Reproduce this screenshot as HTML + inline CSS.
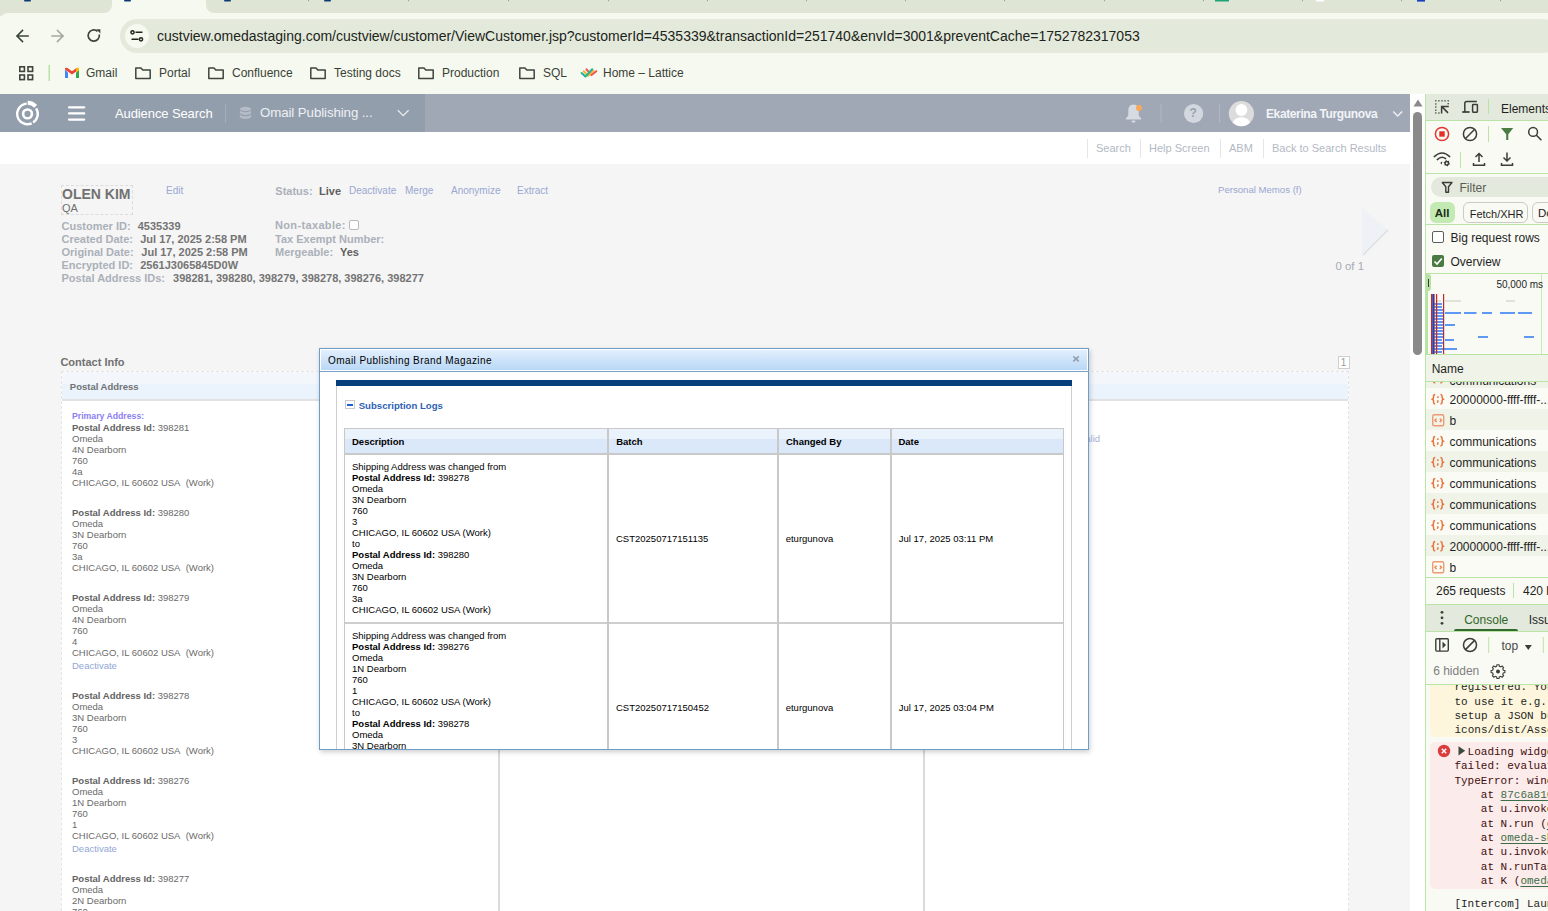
<!DOCTYPE html>
<html><head><meta charset="utf-8">
<style>
*{box-sizing:border-box;margin:0;padding:0}
html,body{width:1548px;height:911px;overflow:hidden;background:#f5f5f5;font-family:"Liberation Sans",sans-serif}
.a{position:absolute;white-space:nowrap;line-height:1}
svg{position:absolute;overflow:visible}
/* chrome */
#tabs{position:absolute;left:0;top:0;width:1548px;height:16px;background:#dee5d5}
#tab1{position:absolute;left:0;top:-10px;width:112px;height:22.5px;background:#dee5d5;border-radius:0 0 8px 0}
#tab2{position:absolute;left:206px;top:-10px;width:1400px;height:22.5px;background:#dee5d5;border-radius:0 0 0 8px}
#acttab{position:absolute;left:112px;top:0;width:94px;height:14px;background:#f6f9f0}
#toolbar{position:absolute;left:0;top:12.5px;width:1548px;height:82px;background:#f6f9f0;border-radius:8px 0 0 0}
#url{position:absolute;left:120px;top:19px;width:1440px;height:34px;border-radius:17px;background:#e3eadb}
#siteinfo{position:absolute;left:125px;top:24px;width:24px;height:24px;border-radius:12px;background:#f6f9f0}
.bm{position:absolute;top:66.6px;font-size:12px;color:#3a3f36;line-height:1;white-space:nowrap}
/* app header */
#hdr{position:absolute;left:0;top:94px;width:1410px;height:38px;background:#a0a8b6}
#hdrl{position:absolute;left:0;top:94px;width:425px;height:38px;background:#939eac}
#subnav{position:absolute;left:0;top:132px;width:1410px;height:32px;background:#fff}
.sn{position:absolute;top:143.2px;font-size:11px;color:#b3b9c4}
.snsep{position:absolute;top:139px;width:1px;height:19px;background:#e6e6e6}
/* scrollbar */
#sb{position:absolute;left:1410px;top:94px;width:16px;height:817px;background:#fff}
#thumb{position:absolute;left:1413px;top:112px;width:9px;height:243px;border-radius:5px;background:#8a8a8a}
/* devtools */
#dt{position:absolute;left:1425px;top:94px;width:123px;height:817px;background:#f9faf3;border-left:1px solid #b8e6a8;overflow:hidden}

.lbl{font-size:11px;font-weight:700;color:#abb0b9}
.val{font-size:11px;font-weight:700;color:#747474}
.lnk{font-size:10px;color:#9aa7d2}

.addr{position:absolute;left:72px;font-size:9.5px;line-height:11px;color:#6a6a6a;white-space:nowrap}
.addr b{color:#636363}
.addr b.prim{color:#8b80f2;font-size:8.7px}
.deact{color:#93a6d6;margin-top:1.8px}
#dlg{position:absolute;left:319px;top:348px;width:770px;height:402px;border:1px solid #6f9dc9;background:#fff;box-shadow:1px 2px 5px rgba(0,0,0,0.2);overflow:hidden}
#dtitle{position:absolute;left:0;top:0;width:768px;height:22px;border:1px solid #fff;border-bottom:1.5px solid #fff;background:linear-gradient(#e2effd,#b9d8f7)}
#dtline{position:absolute;left:0;top:22px;width:768px;height:1px;background:#7aa2c8}
.tb{position:absolute;font-size:9.5px;line-height:11px;color:#000;white-space:nowrap}
.tb b{color:#000}
.th{position:absolute;font-size:9.5px;font-weight:700;color:#000;line-height:1;white-space:nowrap}

#dt .t{position:absolute;white-space:nowrap;font-size:12px;line-height:1;color:#1f1f1f}
#dt .ln{position:absolute;left:0;width:122px;height:1px;background:#b9e4a6}
#dt .row{position:absolute;left:0;width:122px;height:21px}
#dt .mono{position:absolute;white-space:pre;font-family:"Liberation Mono",monospace;font-size:11px;line-height:14.35px;color:#1f1f1f}
#dt .lk{color:#3b6d46;text-decoration:underline;text-underline-offset:1.5px}
</style></head>
<body>
<!-- CHROME TABS -->
<div id="tabs"></div>
<div id="toolbar"></div>
<div style="position:absolute;left:0;top:0;width:1548px;height:12.5px;background:#f6f9f0"></div>
<div id="tab1"></div><div id="tab2"></div>
<svg style="left:0;top:0" width="1548" height="4"><rect x="24" y="0" width="7" height="1.6" rx="0.8" fill="#0b3a78"/><rect x="124" y="0" width="7" height="1.6" rx="0.8" fill="#0b3a78"/><rect x="224" y="0" width="7" height="1.6" rx="0.8" fill="#0b3a78"/><rect x="324" y="0" width="7" height="1.6" rx="0.8" fill="#0b3a78"/><rect x="308" y="0" width="1" height="1.2" fill="#9aa393"/><rect x="408" y="0" width="1" height="1.2" fill="#9aa393"/><rect x="508" y="0" width="1" height="1.2" fill="#9aa393"/><rect x="608" y="0" width="1" height="1.2" fill="#9aa393"/><rect x="707" y="0" width="1" height="1.2" fill="#9aa393"/><rect x="806" y="0" width="1" height="1.2" fill="#9aa393"/><rect x="905" y="0" width="1" height="1.2" fill="#9aa393"/><rect x="1004" y="0" width="1" height="1.2" fill="#9aa393"/><rect x="1104" y="0" width="1" height="1.2" fill="#9aa393"/><rect x="1203" y="0" width="1" height="1.2" fill="#9aa393"/><rect x="1302" y="0" width="1" height="1.2" fill="#9aa393"/><rect x="1401" y="0" width="1" height="1.2" fill="#9aa393"/><rect x="1500" y="0" width="1" height="1.2" fill="#9aa393"/><rect x="1215" y="0" width="14" height="1.5" fill="#21a37a"/><rect x="1316" y="0" width="8" height="1.5" fill="#ffffff"/><rect x="1417" y="0" width="8" height="1.6" fill="#1a3fc2"/></svg>
<div id="url"></div>
<div id="siteinfo"></div>
<div class="a" style="left:157px;top:28.7px;font-size:14px;color:#1d2420">custview.omedastaging.com/custview/customer/ViewCustomer.jsp?customerId=4535339&amp;transactionId=251740&amp;envId=3001&amp;preventCache=1752782317053</div>


<!-- toolbar icons -->
<svg style="left:0;top:0" width="200" height="60">
 <g fill="none" stroke="#3c4638" stroke-width="1.6" stroke-linecap="square">
  <path d="M28 36H17M22.5 30.5L17 36L22.5 41.5"/>
 </g>
 <g fill="none" stroke="#a3ab9c" stroke-width="1.6" stroke-linecap="square">
  <path d="M52 36H63M57.5 30.5L63 36L57.5 41.5"/>
 </g>
 <g fill="none" stroke="#3c4638" stroke-width="1.7">
  <path d="M99.3 34.5A5.6 5.6 0 1 1 97.5 31.3"/>
 </g>
 <path d="M96.2 29.2L100.4 29.2L100.4 33.4Z" fill="#3c4638"/>
 <g fill="none" stroke="#1f261c" stroke-width="1.5">
  <circle cx="132.5" cy="32.3" r="1.6"/>
  <path d="M135.5 32.3H142.5M131.5 39.3H138.5"/>
  <circle cx="141" cy="39.3" r="1.6"/>
 </g>
</svg>
<!-- bookmarks -->
<svg style="left:0;top:0" width="700" height="94">
 <g fill="none" stroke="#3f443c" stroke-width="1.6">
  <rect x="19.8" y="66.8" width="4.6" height="4.6"/>
  <rect x="28" y="66.8" width="4.6" height="4.6"/>
  <rect x="19.8" y="75" width="4.6" height="4.6"/>
  <rect x="28" y="75" width="4.6" height="4.6"/>
 </g>
 <rect x="48.5" y="65" width="1.5" height="16" fill="#b6e3a3"/>
 <g>
  <path d="M65 69.5V78H68V72.5Z" fill="#4285f4"/>
  <path d="M76 72.5V78H79V69.5Z" fill="#34a853"/>
  <path d="M65 69.5L72 74.5L79 69.5L79 68.3Q77.8 67.2 76.5 68L72 71.3L67.5 68Q66.2 67.2 65 68.3Z" fill="#ea4335"/>
  <path d="M76 72.5L79 70.3V68.3Q77.8 67.2 76.5 68L76 68.4Z" fill="#fbbc04"/>
 </g>
 <g fill="none" stroke="#3f443c" stroke-width="1.5" stroke-linejoin="round">
  <path id="fold" d="M135.8 68H141L142.8 70H150.2V78.4H135.8Z"/>
  <use href="#fold" x="73"/>
  <use href="#fold" x="175"/>
  <use href="#fold" x="283"/>
  <use href="#fold" x="384"/>
 </g>
 <g stroke-width="2" stroke-linecap="round" stroke-linejoin="round" fill="none">
  <path d="M586.5 69.3L591.5 75L596.3 71.2" stroke="#ef5350"/>
  <path d="M583.8 71.3L588 75.8L593.5 70.5" stroke="#f6b132"/>
  <path d="M581.6 73L585.4 76.6L592.2 69.2" stroke="#1fb59a"/>
 </g>
</svg>
<div class="bm" style="left:86px">Gmail</div>
<div class="bm" style="left:159px">Portal</div>
<div class="bm" style="left:232px">Confluence</div>
<div class="bm" style="left:334px">Testing docs</div>
<div class="bm" style="left:442px">Production</div>
<div class="bm" style="left:543px">SQL</div>
<div class="bm" style="left:603px">Home – Lattice</div>

<!-- APP HEADER -->
<div id="hdr"></div>
<div id="hdrl"></div>
<div id="subnav"></div>

<svg style="left:0;top:94px" width="1410" height="38">
 <!-- logo -->
 <g fill="none" stroke="#fff">
  <circle cx="27.5" cy="19.9" r="4.4" stroke-width="2.6"/>
  <path d="M26.6 9.64A10.3 10.3 0 1 0 31.69 29.31" stroke-width="2.4"/>
  <path d="M33.11 28.54A10.3 10.3 0 0 0 36.14 14.29" stroke-width="2.4"/>
 </g>
 <path d="M27.73 6.7A13.2 13.2 0 0 1 37.15 10.9L34.16 13.69A9.1 9.1 0 0 0 27.66 10.8Z" fill="#fff"/>
 <!-- hamburger -->
 <g stroke="#fff" stroke-width="2.2" stroke-linecap="round">
  <path d="M69 13.3H84.2M69 19.4H84.2M69 25.6H84.2"/>
 </g>
 <rect x="225" y="10" width="1" height="19" fill="#a4adb9"/>
 <!-- db icon -->
 <g fill="#b5bcc7" transform="translate(0,1.5)">
  <ellipse cx="245.5" cy="13.5" rx="5.6" ry="2.2"/>
  <path d="M239.9 14.5V17.2A5.6 2.2 0 0 0 251.1 17.2V14.5A5.6 2.2 0 0 1 239.9 14.5Z"/>
  <path d="M239.9 18.6V21.2A5.6 2.2 0 0 0 251.1 21.2V18.6A5.6 2.2 0 0 1 239.9 18.6Z"/>
 </g>
 <path d="M397.8 16.3L403.2 21.6L408.6 16.3" fill="none" stroke="#e8ebef" stroke-width="1.3"/>
 <!-- bell -->
 <path d="M1133.5 10.5C1129.5 10.5 1128.3 13.7 1128.3 17V21.5L1125.8 24.5V25.6H1141.2V24.5L1138.7 21.5V17C1138.7 13.7 1137.5 10.5 1133.5 10.5Z" fill="#d6dae1"/>
 <rect x="1131.5" y="26.5" width="4" height="2" rx="1" fill="#d6dae1"/>
 <circle cx="1139" cy="14" r="3" fill="#f7a85a"/>
 <rect x="1160.5" y="10" width="1" height="19" fill="#b0b7c2"/>
 <circle cx="1193.6" cy="19.5" r="9.6" fill="#d3d7de"/>
 <rect x="1219" y="10" width="1" height="19" fill="#b0b7c2"/>
 <circle cx="1241.4" cy="19.6" r="12.6" fill="#dcdcdc"/>
 <clipPath id="avc"><circle cx="1241.4" cy="19.6" r="12.6"/></clipPath>
 <g clip-path="url(#avc)" fill="#fff">
  <circle cx="1241.4" cy="16" r="5.9"/>
  <ellipse cx="1241.4" cy="31.5" rx="9.3" ry="8.6"/>
 </g>
 <path d="M1393.2 17.4L1397.7 21.9L1402.2 17.4" fill="none" stroke="#eef0f3" stroke-width="1.4"/>
</svg>
<div class="a" style="left:115px;top:106.7px;font-size:13px;color:#fff;letter-spacing:-0.1px">Audience Search</div>
<div class="a" style="left:260px;top:105.7px;font-size:13.3px;color:#eef0f4;letter-spacing:-0.1px">Omail Publishing ...</div>
<div class="a" style="left:1189.5px;top:106.5px;font-size:12px;font-weight:700;color:#9ba3b0">?</div>
<div class="a" style="left:1266px;top:108px;font-size:12px;letter-spacing:-0.38px;font-weight:700;color:#f2f4f7">Ekaterina Turgunova</div>



<!-- SUBNAV -->
<div class="snsep" style="left:1087px"></div>
<div class="snsep" style="left:1140px"></div>
<div class="snsep" style="left:1220px"></div>
<div class="snsep" style="left:1263px"></div>
<div class="a sn" style="left:1096px">Search</div>
<div class="a sn" style="left:1149px">Help Screen</div>
<div class="a sn" style="left:1229px">ABM</div>
<div class="a sn" style="left:1272px">Back to Search Results</div>

<!-- CUSTOMER -->
<div style="position:absolute;left:61px;top:185px;width:72px;height:30px;border:1px dashed #dcdcdc"></div>
<div class="a" style="left:62px;top:187.1px;font-size:14px;font-weight:700;color:#727272">OLEN KIM</div>
<div class="a" style="left:62px;top:202.7px;font-size:11px;color:#707070">QA</div>
<div class="a lnk" style="left:166px;top:185.5px">Edit</div>
<div class="a lbl" style="left:61.5px;top:220.7px">Customer ID:</div><div class="a val" style="left:137.7px;top:220.7px">4535339</div>
<div class="a lbl" style="left:61.5px;top:233.7px">Created Date:</div><div class="a val" style="left:140.2px;top:233.7px">Jul 17, 2025 2:58 PM</div>
<div class="a lbl" style="left:61.5px;top:246.5px">Original Date:</div><div class="a val" style="left:141.3px;top:246.5px">Jul 17, 2025 2:58 PM</div>
<div class="a lbl" style="left:61.5px;top:259.5px">Encrypted ID:</div><div class="a val" style="left:140.2px;top:259.5px">2561J3065845D0W</div>
<div class="a lbl" style="left:61.5px;top:272.7px">Postal Address IDs:</div><div class="a val" style="left:173.1px;top:272.7px">398281, 398280, 398279, 398278, 398276, 398277</div>

<div class="a lbl" style="left:275.3px;top:186.1px">Status:</div><div class="a val" style="left:319px;top:186.1px;color:#5f5f5f">Live</div>
<div class="a lnk" style="left:349px;top:186px">Deactivate</div>
<div class="a lnk" style="left:405px;top:186px">Merge</div>
<div class="a lnk" style="left:451px;top:186px">Anonymize</div>
<div class="a lnk" style="left:517px;top:186px">Extract</div>
<div class="a lbl" style="left:275px;top:219.6px;letter-spacing:0.35px">Non-taxable:</div>
<div style="position:absolute;left:349px;top:220px;width:10px;height:10px;border:1px solid #b9b9b9;border-radius:2px;background:#fff"></div>
<div class="a lbl" style="left:275px;top:233.9px">Tax Exempt Number:</div>
<div class="a lbl" style="left:275px;top:247px">Mergeable:</div><div class="a val" style="left:340px;top:247px;color:#5f5f5f">Yes</div>

<div class="a lnk" style="left:1218px;top:184.9px;font-size:9.6px">Personal Memos (f)</div>
<svg style="left:1355px;top:200px" width="45" height="65">
 <path d="M7 8L33 30L7 56Z" fill="#eef2f7"/>
 <path d="M33 30L8 55" stroke="#dedede" stroke-width="1.2" fill="none"/>
</svg>
<div class="a" style="left:1335.5px;top:261.2px;font-size:11.4px;color:#a6abb4">0 of 1</div>

<!-- CONTACT INFO -->
<div class="a" style="left:60.4px;top:356.7px;font-size:11px;font-weight:700;color:#717171">Contact Info</div>
<div style="position:absolute;left:1337.5px;top:355.5px;width:12.5px;height:13px;border:1px solid #cfcfcf;background:#fff"></div>
<div class="a" style="left:1340.8px;top:357.8px;font-size:10px;color:#9a9a9a">1</div>
<div id="cpanel" style="position:absolute;left:60.5px;top:371px;width:1288.5px;height:600px;border:1px dashed #e4e4e4;background:#fff">
 <div style="position:absolute;left:0;top:0;width:100%;height:28.5px;background:linear-gradient(#f3f7fc 0,#f3f7fc 45%,#ebf3fd 45%,#ebf3fd 100%);border-bottom:2px solid #e2e2e2"></div>
 <div style="position:absolute;left:436.8px;top:30px;width:1.5px;height:600px;background:#dadada"></div>
 <div style="position:absolute;left:861.8px;top:30px;width:1.5px;height:600px;background:#dadada"></div>
</div>
<div class="a" style="left:69.8px;top:382px;font-size:9.5px;font-weight:700;color:#727272">Postal Address</div>
<div class="a" style="left:1085.3px;top:433.5px;font-size:9.5px;color:#a7b1d6">alid</div>

<div class="addr" style="top:410.2px"><b class="prim">Primary Address:</b><br><b>Postal Address Id:</b> 398281<br>Omeda<br>4N Dearborn<br>760<br>4a<br>CHICAGO, IL 60602 USA&nbsp; (Work)</div><div class="addr" style="top:506.9px"><b>Postal Address Id:</b> 398280<br>Omeda<br>3N Dearborn<br>760<br>3a<br>CHICAGO, IL 60602 USA&nbsp; (Work)</div><div class="addr" style="top:591.9px"><b>Postal Address Id:</b> 398279<br>Omeda<br>4N Dearborn<br>760<br>4<br>CHICAGO, IL 60602 USA&nbsp; (Work)<div class="deact">Deactivate</div></div><div class="addr" style="top:690.4px"><b>Postal Address Id:</b> 398278<br>Omeda<br>3N Dearborn<br>760<br>3<br>CHICAGO, IL 60602 USA&nbsp; (Work)</div><div class="addr" style="top:775px"><b>Postal Address Id:</b> 398276<br>Omeda<br>1N Dearborn<br>760<br>1<br>CHICAGO, IL 60602 USA&nbsp; (Work)<div class="deact">Deactivate</div></div><div class="addr" style="top:872.8px"><b>Postal Address Id:</b> 398277<br>Omeda<br>2N Dearborn<br>760</div>

<div id="dlg">
 <div id="dtitle"></div>
 <div id="dtline"></div>
 <div class="a" style="left:8px;top:7.4px;font-size:10px;letter-spacing:0.43px;color:#000">Omail Publishing Brand Magazine</div>
 <svg style="left:752px;top:5.6px" width="10" height="8"><path d="M1.3 1.3L6.8 6.4M6.8 1.3L1.3 6.4" stroke="#95a0ae" stroke-width="1.6"/></svg>
 <!-- inner panel; coords relative to dialog (x-320, y-349) -->
 <div style="position:absolute;left:16px;top:31px;width:736px;height:400px;border-left:1px solid #cfcfcf;border-right:1px solid #cfcfcf"></div>
 <div style="position:absolute;left:16px;top:31px;width:736px;height:6px;background:#063e7b"></div>
 <div style="position:absolute;left:25px;top:50.5px;width:10px;height:9.5px;border:1px solid #c9c9c9;background:#fff"></div>
 <div style="position:absolute;left:27px;top:54.6px;width:6px;height:2px;background:#1f5fd6"></div>
 <div class="a" style="left:38.7px;top:52px;font-size:9.6px;font-weight:700;color:#2e5fb4">Subscription Logs</div>
 <!-- table -->
 <div style="position:absolute;left:24px;top:78.5px;width:720px;height:400px;border:1px solid #c8c8c8;border-bottom:none"></div>
 <div style="position:absolute;left:25px;top:79.5px;width:718px;height:24px;background:linear-gradient(#eaf2fc 0,#eaf2fc 42%,#dbe8f9 42%,#dbe8f9 100%)"></div>
 <div style="position:absolute;left:25px;top:103.5px;width:718px;height:2px;background:#c9c9c9"></div>
 <div style="position:absolute;left:25px;top:273px;width:718px;height:2px;background:#cfcfcf"></div>
 <div style="position:absolute;left:287px;top:79px;width:2px;height:400px;background:#c9c9c9"></div>
 <div style="position:absolute;left:457px;top:79px;width:2px;height:400px;background:#c9c9c9"></div>
 <div style="position:absolute;left:570px;top:79px;width:2px;height:400px;background:#c9c9c9"></div>
 <div class="th" style="left:32px;top:88px">Description</div>
 <div class="th" style="left:296.2px;top:88px">Batch</div>
 <div class="th" style="left:466px;top:88px">Changed By</div>
 <div class="th" style="left:578.4px;top:88px">Date</div>
 <div class="tb" style="left:32px;top:112.4px">Shipping Address was changed from<br><b>Postal Address Id:</b> 398278<br>Omeda<br>3N Dearborn<br>760<br>3<br>CHICAGO, IL 60602 USA (Work)<br>to<br><b>Postal Address Id:</b> 398280<br>Omeda<br>3N Dearborn<br>760<br>3a<br>CHICAGO, IL 60602 USA (Work)</div>
 <div class="tb" style="left:296px;top:184.2px">CST20250717151135</div>
 <div class="tb" style="left:465.7px;top:184.2px">eturgunova</div>
 <div class="tb" style="left:578.8px;top:184.2px">Jul 17, 2025 03:11 PM</div>
 <div class="tb" style="left:32px;top:280.6px">Shipping Address was changed from<br><b>Postal Address Id:</b> 398276<br>Omeda<br>1N Dearborn<br>760<br>1<br>CHICAGO, IL 60602 USA (Work)<br>to<br><b>Postal Address Id:</b> 398278<br>Omeda<br>3N Dearborn<br>760</div>
 <div class="tb" style="left:296px;top:353px">CST20250717150452</div>
 <div class="tb" style="left:465.7px;top:353px">eturgunova</div>
 <div class="tb" style="left:578.8px;top:353px">Jul 17, 2025 03:04 PM</div>
</div>

<div id="sb"></div>
<div id="thumb"></div>
<svg style="left:1410px;top:94px" width="16" height="16"><path d="M3.5 12.5L8 5.5L12.5 12.5Z" fill="#8a8a8a"/></svg>

<div id="dt">
 <div style="position:absolute;left:0;top:0;width:122px;height:26px;background:#e3e9dc"></div>
 <div class="ln" style="top:26px"></div>
 <svg style="left:0;top:0" width="122" height="80">
  <g fill="#3a3d38"><rect x="9.15" y="6.15" width="1.3" height="1.3"/><rect x="12.25" y="6.15" width="1.3" height="1.3"/><rect x="15.35" y="6.15" width="1.3" height="1.3"/><rect x="18.35" y="6.15" width="1.3" height="1.3"/><rect x="21.55" y="6.15" width="1.3" height="1.3"/><rect x="9.15" y="9.35" width="1.3" height="1.3"/><rect x="9.15" y="12.35" width="1.3" height="1.3"/><rect x="9.15" y="15.549999999999999" width="1.3" height="1.3"/><rect x="9.15" y="18.35" width="1.3" height="1.3"/><rect x="12.25" y="18.35" width="1.3" height="1.3"/><rect x="21.55" y="9.05" width="1.3" height="1.3"/></g>
  <g fill="none" stroke="#3a3d38" stroke-width="1.5">
   <path d="M15.6 19.6V12.4H22.8M15.6 12.4L22 18.9"/>
   <path d="M38.8 18V9.6Q38.8 7.6 40.8 7.6H50.8"/>
   <path d="M36.2 18H43.6" stroke-width="1.7"/>
   <rect x="46.6" y="10.6" width="4.8" height="7.6" rx="0.6"/>
  </g>
  <rect x="62" y="5" width="1" height="15" fill="#b9e4a6"/>
  <circle cx="16" cy="40" r="6.6" fill="none" stroke="#e5332f" stroke-width="1.5"/>
  <rect x="13.3" y="37.3" width="5.4" height="5.4" fill="#e3302c"/>
  <circle cx="44" cy="40" r="6.6" fill="none" stroke="#3a3d38" stroke-width="1.5"/>
  <path d="M48.7 35.3L39.3 44.7" stroke="#3a3d38" stroke-width="1.5"/>
  <rect x="62" y="32" width="1" height="16" fill="#b9e4a6"/>
  <path d="M75 34.1H87.2L82.3 40.2V46.1H80.2V40.2Z" fill="#4a7d44"/>
  <circle cx="107.1" cy="37.9" r="4.4" fill="none" stroke="#3a3d38" stroke-width="1.5"/>
  <path d="M110.2 41L115.4 46.2" stroke="#3a3d38" stroke-width="1.6"/>
  <g fill="none" stroke="#3a3d38" stroke-width="1.5" stroke-linecap="round">
   <path d="M8.3 62.6Q16 55.5 23.7 62.6M11.3 65.6Q15.5 61.5 19.6 64.6"/>
  </g>
  <path d="M23.99 70.05L22.50 70.90L21.65 72.39L20.18 71.52L18.47 71.53L18.48 69.82L17.61 68.35L19.10 67.50L19.95 66.01L21.42 66.88L23.13 66.87L23.12 68.58Z" fill="#3a3d38"/>
  <circle cx="20.8" cy="69.2" r="1" fill="#f9faf3"/>
  <path d="M16.3 67.3L14.2 68.9L15.9 70.4Z" fill="#3a3d38"/>
  <rect x="34" y="58" width="1" height="16" fill="#b9e4a6"/>
  <g fill="none" stroke="#3a3d38" stroke-width="1.5">
   <path d="M53 59.5V68M49.5 63L53 59.5L56.5 63M47.5 69V71.3H58.5V69"/>
   <path d="M81 58.5V67M77.5 63.5L81 67L84.5 63.5M75.5 69V71.3H86.5V69"/>
  </g>
 </svg>
 <div class="t" style="left:75px;top:9px">Elements</div>
 <div class="ln" style="top:79px"></div>
 <div style="position:absolute;left:5px;top:83px;width:140px;height:20px;border-radius:10px;background:#e3e9dc"></div>
 <svg style="left:0;top:80px" width="30" height="30"><path d="M16.3 8.5H26L22.5 12.8V18.3H19.8V12.8Z" fill="none" stroke="#3a3d38" stroke-width="1.4" stroke-linejoin="round"/></svg>
 <div class="t" style="left:33.5px;top:87.5px;color:#595d55">Filter</div>
 <div style="position:absolute;left:4px;top:108px;width:25px;height:21px;border-radius:6px;background:#c3eab3"></div>
 <div class="t" style="left:8.8px;top:114.4px;font-weight:600;color:#1c2a18;font-size:11.5px">All</div>
 <div style="position:absolute;left:37px;top:108px;width:65px;height:21px;border-radius:6px;border:1px solid #c8ccc3"></div>
 <div class="t" style="left:43.7px;top:114.8px;font-size:11px">Fetch/XHR</div>
 <div style="position:absolute;left:106px;top:108px;width:40px;height:21px;border-radius:6px;border:1px solid #c8ccc3"></div>
 <div class="t" style="left:112px;top:114.4px;font-size:11.5px">Doc</div>
 <div class="ln" style="top:130px"></div>
 <div style="position:absolute;left:6.3px;top:137.3px;width:11.8px;height:11.8px;border:1.3px solid #5d5d5d;border-radius:2px;background:#fff"></div>
 <div class="t" style="left:24.5px;top:138.3px">Big request rows</div>
 <div style="position:absolute;left:6.3px;top:161.3px;width:11.8px;height:11.8px;border-radius:2px;background:#4b7b45"></div>
 <svg style="left:0;top:150px" width="24" height="30"><path d="M8.5 17.5L11 20L15.8 14.5" fill="none" stroke="#fff" stroke-width="1.7"/></svg>
 <div class="t" style="left:24.5px;top:162px">Overview</div>
 <div class="ln" style="top:179px"></div>
 <!-- overview -->
 <div style="position:absolute;left:0;top:180px;width:4.5px;height:17px;border-radius:0 3px 3px 0;background:#b6e3a2"></div>
 <div style="position:absolute;left:1.5px;top:185px;width:1px;height:8px;background:#3b3b3b"></div>
 <div style="position:absolute;left:115px;top:180px;width:1px;height:80px;background:#c9ebbb"></div>
 <div style="position:absolute;left:0;top:197px;width:1.5px;height:63px;background:#b6e3a2"></div>
 <div class="t" style="left:70.4px;top:186.3px;font-size:10px">50,000 ms</div>
 <svg style="left:0;top:180px" width="122" height="80">
  <g fill="#5d98f3"><rect x="8" y="29" width="8" height="2"/><rect x="8" y="32" width="8" height="2"/><rect x="8" y="35" width="9" height="2"/><rect x="8" y="38" width="9" height="2"/><rect x="8" y="41" width="9" height="2"/><rect x="8" y="44" width="9" height="2"/><rect x="8" y="47" width="9" height="2"/><rect x="8" y="50" width="9" height="2"/><rect x="8" y="53" width="10" height="2"/><rect x="8" y="56" width="10" height="2"/><rect x="8" y="59" width="10" height="2"/><rect x="8" y="62" width="10" height="2"/><rect x="8" y="65" width="8" height="2"/><rect x="8" y="68" width="9" height="2"/><rect x="8" y="71" width="8" height="2"/><rect x="8" y="74" width="10" height="2"/><rect x="8" y="77" width="8" height="2"/><rect x="19" y="38" width="16" height="2"/><rect x="38" y="38" width="12.5" height="2"/><rect x="56" y="38" width="10" height="2"/><rect x="74" y="38" width="15" height="2"/><rect x="92" y="38" width="14" height="2"/><rect x="19" y="50" width="10" height="2"/><rect x="52" y="62" width="10" height="2"/><rect x="98" y="62" width="10" height="2"/><rect x="19" y="65" width="9" height="2"/><rect x="11" y="74" width="20" height="2"/></g>
  <g fill="#dfe3da"><rect x="11" y="26" width="4" height="2"/><rect x="19" y="26" width="16" height="2"/><rect x="80" y="26" width="9" height="2"/></g>
  <rect x="5" y="20" width="1.4" height="60" fill="#c0272d"/>
  <rect x="6.3" y="20" width="1.8" height="60" fill="#1f3fae"/>
  <rect x="7.8" y="20" width="0.8" height="60" fill="#c0272d"/>
  <rect x="10" y="20" width="1.2" height="60" fill="#c0272d"/>
  <rect x="17" y="20" width="1.2" height="60" fill="#c0272d"/>
 </svg>
 <div class="ln" style="top:260px"></div>
 <div class="row" style="top:273px;background:#f0f3e8"></div>
 <svg style="left:5px;top:277px" width="14" height="14"><g fill="none" stroke="#e8703a" stroke-width="1.45" stroke-linejoin="round"><path d="M4.2 2.4Q2.5 2.4 2.5 4.2V5.8Q2.5 7.2 0.9 7.2Q2.5 7.2 2.5 8.6V10.3Q2.5 12 4.2 12M9.4 2.4Q11.1 2.4 11.1 4.2V5.8Q11.1 7.2 12.7 7.2Q11.1 7.2 11.1 8.6V10.3Q11.1 12 9.4 12"/><path d="M6.9 8.2V9.5L6.3 10.7"/></g><circle cx="6.85" cy="5.1" r="0.95" fill="#e8703a"/></svg>
 <div class="t" style="left:23.5px;top:280.9px">communications</div>
 <div style="position:absolute;left:0;top:261px;width:122px;height:26px;background:#f0f3e8"></div>
 <div class="t" style="left:5.7px;top:268.6px">Name</div>
 <div class="ln" style="top:287px"></div>
 
 <div class="row" style="top:294px;background:#fafbf4"></div><svg style="left:5px;top:298px" width="14" height="14"><g fill="none" stroke="#e8703a" stroke-width="1.45" stroke-linejoin="round"><path d="M4.2 2.4Q2.5 2.4 2.5 4.2V5.8Q2.5 7.2 0.9 7.2Q2.5 7.2 2.5 8.6V10.3Q2.5 12 4.2 12M9.4 2.4Q11.1 2.4 11.1 4.2V5.8Q11.1 7.2 12.7 7.2Q11.1 7.2 11.1 8.6V10.3Q11.1 12 9.4 12"/><path d="M6.9 8.2V9.5L6.3 10.7"/></g><circle cx="6.85" cy="5.1" r="0.95" fill="#e8703a"/></svg><div class="t" style="left:23.5px;top:300.1px">20000000-ffff-ffff-...</div><div class="row" style="top:315px;background:#f0f3e8"></div><svg style="left:5px;top:319px" width="14" height="14"><rect x="1.7" y="1.8" width="11" height="11" rx="1.5" fill="none" stroke="#ee9a72" stroke-width="1.4"/><path d="M5.6 5.6L3.9 7.3L5.6 9M8.8 5.6L10.5 7.3L8.8 9" fill="none" stroke="#ec8050" stroke-width="1.3"/></svg><div class="t" style="left:23.5px;top:321.1px">b</div><div class="row" style="top:336px;background:#fafbf4"></div><svg style="left:5px;top:340px" width="14" height="14"><g fill="none" stroke="#e8703a" stroke-width="1.45" stroke-linejoin="round"><path d="M4.2 2.4Q2.5 2.4 2.5 4.2V5.8Q2.5 7.2 0.9 7.2Q2.5 7.2 2.5 8.6V10.3Q2.5 12 4.2 12M9.4 2.4Q11.1 2.4 11.1 4.2V5.8Q11.1 7.2 12.7 7.2Q11.1 7.2 11.1 8.6V10.3Q11.1 12 9.4 12"/><path d="M6.9 8.2V9.5L6.3 10.7"/></g><circle cx="6.85" cy="5.1" r="0.95" fill="#e8703a"/></svg><div class="t" style="left:23.5px;top:342.1px">communications</div><div class="row" style="top:357px;background:#f0f3e8"></div><svg style="left:5px;top:361px" width="14" height="14"><g fill="none" stroke="#e8703a" stroke-width="1.45" stroke-linejoin="round"><path d="M4.2 2.4Q2.5 2.4 2.5 4.2V5.8Q2.5 7.2 0.9 7.2Q2.5 7.2 2.5 8.6V10.3Q2.5 12 4.2 12M9.4 2.4Q11.1 2.4 11.1 4.2V5.8Q11.1 7.2 12.7 7.2Q11.1 7.2 11.1 8.6V10.3Q11.1 12 9.4 12"/><path d="M6.9 8.2V9.5L6.3 10.7"/></g><circle cx="6.85" cy="5.1" r="0.95" fill="#e8703a"/></svg><div class="t" style="left:23.5px;top:363.1px">communications</div><div class="row" style="top:378px;background:#fafbf4"></div><svg style="left:5px;top:382px" width="14" height="14"><g fill="none" stroke="#e8703a" stroke-width="1.45" stroke-linejoin="round"><path d="M4.2 2.4Q2.5 2.4 2.5 4.2V5.8Q2.5 7.2 0.9 7.2Q2.5 7.2 2.5 8.6V10.3Q2.5 12 4.2 12M9.4 2.4Q11.1 2.4 11.1 4.2V5.8Q11.1 7.2 12.7 7.2Q11.1 7.2 11.1 8.6V10.3Q11.1 12 9.4 12"/><path d="M6.9 8.2V9.5L6.3 10.7"/></g><circle cx="6.85" cy="5.1" r="0.95" fill="#e8703a"/></svg><div class="t" style="left:23.5px;top:384.1px">communications</div><div class="row" style="top:399px;background:#f0f3e8"></div><svg style="left:5px;top:403px" width="14" height="14"><g fill="none" stroke="#e8703a" stroke-width="1.45" stroke-linejoin="round"><path d="M4.2 2.4Q2.5 2.4 2.5 4.2V5.8Q2.5 7.2 0.9 7.2Q2.5 7.2 2.5 8.6V10.3Q2.5 12 4.2 12M9.4 2.4Q11.1 2.4 11.1 4.2V5.8Q11.1 7.2 12.7 7.2Q11.1 7.2 11.1 8.6V10.3Q11.1 12 9.4 12"/><path d="M6.9 8.2V9.5L6.3 10.7"/></g><circle cx="6.85" cy="5.1" r="0.95" fill="#e8703a"/></svg><div class="t" style="left:23.5px;top:405.1px">communications</div><div class="row" style="top:420px;background:#fafbf4"></div><svg style="left:5px;top:424px" width="14" height="14"><g fill="none" stroke="#e8703a" stroke-width="1.45" stroke-linejoin="round"><path d="M4.2 2.4Q2.5 2.4 2.5 4.2V5.8Q2.5 7.2 0.9 7.2Q2.5 7.2 2.5 8.6V10.3Q2.5 12 4.2 12M9.4 2.4Q11.1 2.4 11.1 4.2V5.8Q11.1 7.2 12.7 7.2Q11.1 7.2 11.1 8.6V10.3Q11.1 12 9.4 12"/><path d="M6.9 8.2V9.5L6.3 10.7"/></g><circle cx="6.85" cy="5.1" r="0.95" fill="#e8703a"/></svg><div class="t" style="left:23.5px;top:426.1px">communications</div><div class="row" style="top:441px;background:#f0f3e8"></div><svg style="left:5px;top:445px" width="14" height="14"><g fill="none" stroke="#e8703a" stroke-width="1.45" stroke-linejoin="round"><path d="M4.2 2.4Q2.5 2.4 2.5 4.2V5.8Q2.5 7.2 0.9 7.2Q2.5 7.2 2.5 8.6V10.3Q2.5 12 4.2 12M9.4 2.4Q11.1 2.4 11.1 4.2V5.8Q11.1 7.2 12.7 7.2Q11.1 7.2 11.1 8.6V10.3Q11.1 12 9.4 12"/><path d="M6.9 8.2V9.5L6.3 10.7"/></g><circle cx="6.85" cy="5.1" r="0.95" fill="#e8703a"/></svg><div class="t" style="left:23.5px;top:447.1px">20000000-ffff-ffff-...</div><div class="row" style="top:462px;background:#fafbf4"></div><svg style="left:5px;top:466px" width="14" height="14"><rect x="1.7" y="1.8" width="11" height="11" rx="1.5" fill="none" stroke="#ee9a72" stroke-width="1.4"/><path d="M5.6 5.6L3.9 7.3L5.6 9M8.8 5.6L10.5 7.3L8.8 9" fill="none" stroke="#ec8050" stroke-width="1.3"/></svg><div class="t" style="left:23.5px;top:468.1px">b</div>
 <div class="ln" style="top:483px"></div>
 <div class="t" style="left:10px;top:491.1px">265 requests</div>
 <div style="position:absolute;left:87.3px;top:489px;width:1px;height:15px;background:#b9e4a6"></div>
 <div class="t" style="left:97px;top:491.1px">420 kB transferred</div>
 <div class="ln" style="top:510px"></div>
 <div style="position:absolute;left:0;top:511px;width:122px;height:26px;background:#e3e9dc"></div>
 <svg style="left:0;top:511px" width="30" height="26"><g fill="#3a3d38"><circle cx="16" cy="7.3" r="1.4"/><circle cx="16" cy="12.8" r="1.4"/><circle cx="16" cy="18.3" r="1.4"/></g></svg>
 <div class="t" style="left:38.2px;top:519.6px;color:#2f652b">Console</div>
 <div class="t" style="left:102.7px;top:519.6px">Issues</div>
 <div style="position:absolute;left:28px;top:535px;width:64px;height:3px;border-radius:2px 2px 0 0;background:#356a2f"></div>
 <div class="ln" style="top:537px"></div>
 <svg style="left:0;top:538px" width="122" height="52">
  <g fill="none" stroke="#3a3d38" stroke-width="1.4">
   <rect x="9.8" y="6.8" width="12.5" height="12.3" rx="1"/>
   <path d="M13.8 6.8V19.1"/>
  </g>
  <path d="M16.5 9.5L20 13L16.5 16.5Z" fill="#3a3d38"/>
  <circle cx="44" cy="13" r="6.5" fill="none" stroke="#3a3d38" stroke-width="1.5"/>
  <path d="M48.6 8.4L39.4 17.6" stroke="#3a3d38" stroke-width="1.5"/>
  <rect x="62.2" y="5" width="1" height="16" fill="#b9e4a6"/>
  <path d="M98.8 13H105.8L102.3 18Z" fill="#3a3d38"/>
  <rect x="116.8" y="5" width="1" height="16" fill="#b9e4a6"/>
  <g transform="translate(72,39.6) scale(0.86)">
   <path d="M-1.2-7H1.2L1.6-5.2L3.2-4.5L4.8-5.5L6.5-3.8L5.5-2.2L6.2-0.6L8-0.2V2.2L6.2 2.6L5.5 4.2L6.5 5.8L4.8 7.5L3.2 6.5L1.6 7.2L1.2 9H-1.2L-1.6 7.2L-3.2 6.5L-4.8 7.5L-6.5 5.8L-5.5 4.2L-6.2 2.6L-8 2.2V-0.2L-6.2-0.6L-5.5-2.2L-6.5-3.8L-4.8-5.5L-3.2-4.5L-1.6-5.2Z" fill="none" stroke="#3a3d38" stroke-width="1.3" transform="translate(0,-1)"/>
   <circle cx="0" cy="0" r="2.3" fill="#3a3d38"/>
  </g>
 </svg>
 <div class="t" style="left:75.5px;top:545.5px;color:#474747">top</div>
 <div class="t" style="left:7.2px;top:571.2px;color:#7f7f7f">6 hidden</div>
 <div class="ln" style="top:590px"></div>
 <!-- console messages -->
 <div style="position:absolute;left:4.3px;top:591px;width:130px;height:52.3px;border-radius:0 0 5px 5px;background:#fdf6dc;overflow:hidden">
  <div class="mono" style="left:24.2px;top:-19px">...
registered. You
to use it e.g.
setup a JSON bu
icons/dist/Asse</div>
 </div>
 <div style="position:absolute;left:4.3px;top:648px;width:130px;height:147px;border-radius:5px;background:#fcebeb"></div>
 <svg style="left:0;top:648px" width="50" height="20">
  <circle cx="18" cy="9" r="6.2" fill="#dc3b3b"/>
  <path d="M15.8 6.8L20.2 11.2M20.2 6.8L15.8 11.2" stroke="#fff" stroke-width="1.4"/>
  <path d="M32.5 4.2L39.2 8.8L32.5 13.4Z" fill="#3f4a3f"/>
 </svg>
 <div class="mono" style="left:28.4px;top:651px;color:#410e0b">  Loading widget
failed: evaluat
TypeError: wind
    at <span class="lk">87c6a810.js</span>
    at u.invoke
    at N.run (<span class="lk">o</span>
    at <span class="lk">omeda-shell</span>
    at u.invoke
    at N.runTask
    at K (<span class="lk">omeda</span></div>
 <div class="mono" style="left:28.4px;top:802.8px">[Intercom] Launcher</div>
</div>

</body></html>
